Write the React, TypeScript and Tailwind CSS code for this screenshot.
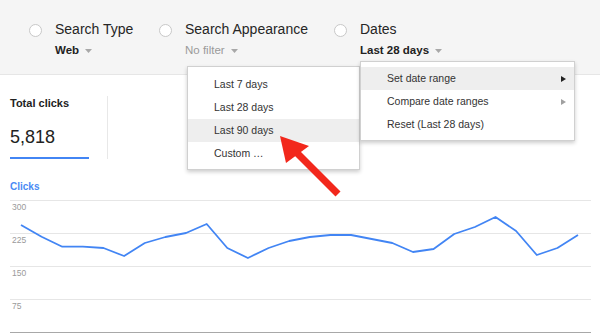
import React from "react";

const font = { fontFamily: '"Liberation Sans", Arial, sans-serif' };

const Caret = () => (
  <svg width="7" height="4" viewBox="0 0 7 4" className="ml-[6px] mt-[1px]">
    <path d="M0 0h7L3.5 4z" fill="#a8a8a8" />
  </svg>
);

const Radio = () => (
  <span className="mt-[4px] h-[13px] w-[13px] shrink-0 rounded-full border border-[#c8c8c8] bg-white" />
);

const filters = [
  { title: "Search Type", value: "Web", muted: false, w: "w-[130px]" },
  { title: "Search Appearance", value: "No filter", muted: true, w: "w-[175px]" },
  { title: "Dates", value: "Last 28 days", muted: false, w: "w-auto" },
];

const points = [
  225, 236.7, 246.7, 246.7, 248, 256, 243, 237, 233, 224, 248, 258, 248, 241,
  237, 235, 235, 239, 243, 252, 249, 234, 227, 217, 231, 255, 248, 235,
];

const TOP = 195;

export default function App() {
  const line = points
    .map((y, i) => `${(21 + i * 20.63).toFixed(1)},${(y - TOP).toFixed(1)}`)
    .join(" ");

  return (
    <div className="relative h-[336px] w-[600px] overflow-hidden bg-white text-[#222]" style={font}>
      {/* filter bar */}
      <div className="flex h-[75px] border-b border-[#e6e6e6] bg-[#f5f5f5] pl-[29px] pt-[20px]">
        {filters.map((f) => (
          <div key={f.title} className={`flex items-start gap-[13px] ${f.w}`}>
            <Radio />
            <div className="flex flex-col">
              <span className="text-[14px] leading-[18px] text-[#262626]">{f.title}</span>
              <span className="mt-[5px] flex items-center text-[11.5px] leading-[14px]">
                <span className={f.muted ? "text-[#9a9a9a]" : "font-bold text-[#222]"}>{f.value}</span>
                <Caret />
              </span>
            </div>
          </div>
        ))}
      </div>

      {/* summary */}
      <div className="flex items-stretch pl-[10px] pt-[21px]">
        <div className="flex w-[79px] flex-col">
          <span className="text-[11px] font-bold leading-[14px] text-[#222]">Total clicks</span>
          <span className="mt-[16px] text-[18px] leading-[22px] text-[#222]">5,818</span>
          <span className="mt-[9px] h-[2px] w-[79px] bg-[#4285f4]" />
        </div>
        <div className="ml-[18px] w-px bg-[#e8e8e8]" />
      </div>

      <div className="pl-[10px] pt-[22px] text-[10px] font-bold leading-[12px] text-[#4a8af4]">Clicks</div>

      {/* chart */}
      <svg width="600" height="141" className="absolute left-0 top-[195px]">
        {[5, 38, 71, 104].map((y) => (
          <line key={y} x1="10" x2="591" y1={y + 0.5} y2={y + 0.5} stroke="#e6e6e6" strokeWidth="1" />
        ))}
        <line x1="10" x2="591" y1="137.5" y2="137.5" stroke="#a8a8a8" strokeWidth="1" />
        {[
          ["300", 15],
          ["225", 48],
          ["150", 81],
          ["75", 114],
        ].map(([t, y]) => (
          <text key={t} x="12" y={y} fontSize="8.5" fill="#9a9a9a" style={font}>
            {t}
          </text>
        ))}
        <polyline points={line} fill="none" stroke="#4285f4" strokeWidth="1.8" strokeLinejoin="round" />
      </svg>

      {/* date preset menu */}
      <div className="absolute left-[187px] top-[66px] h-[104px] w-[173px] border border-[#d0d0d0] bg-white pt-[6px] shadow-[0_2px_4px_rgba(0,0,0,0.2)]">
        {["Last 7 days", "Last 28 days", "Last 90 days", "Custom …"].map((t) => (
          <div
            key={t}
            className={`flex h-[23px] items-center pl-[26px] text-[10.5px] text-[#333] ${t === "Last 90 days" ? "bg-[#eeeeee]" : ""}`}
          >
            {t}
          </div>
        ))}
      </div>

      {/* dates menu */}
      <div className="absolute left-[360px] top-[61px] h-[80px] w-[215px] border border-[#d0d0d0] bg-white pt-[5px] shadow-[0_2px_4px_rgba(0,0,0,0.2)]">
        {[
          { t: "Set date range", arrow: "#222", active: true },
          { t: "Compare date ranges", arrow: "#a0a0a0", active: false },
          { t: "Reset (Last 28 days)", arrow: null, active: false },
        ].map((m) => (
          <div
            key={m.t}
            className={`flex h-[23px] items-center justify-between pl-[26px] pr-[8px] text-[10.5px] text-[#333] ${m.active ? "bg-[#eeeeee]" : ""}`}
          >
            <span>{m.t}</span>
            {m.arrow && (
              <svg width="5" height="6" viewBox="0 0 5 6">
                <path d="M0 0L5 3L0 6z" fill={m.arrow} />
              </svg>
            )}
          </div>
        ))}
      </div>

      {/* red pointer arrow */}
      <svg width="600" height="336" className="pointer-events-none absolute left-0 top-0">
        <line x1="296" y1="152" x2="338" y2="194" stroke="#f2281c" strokeWidth="7" />
        <polygon points="280,136 309,146 286,163" fill="#f2281c" />
      </svg>
    </div>
  );
}
